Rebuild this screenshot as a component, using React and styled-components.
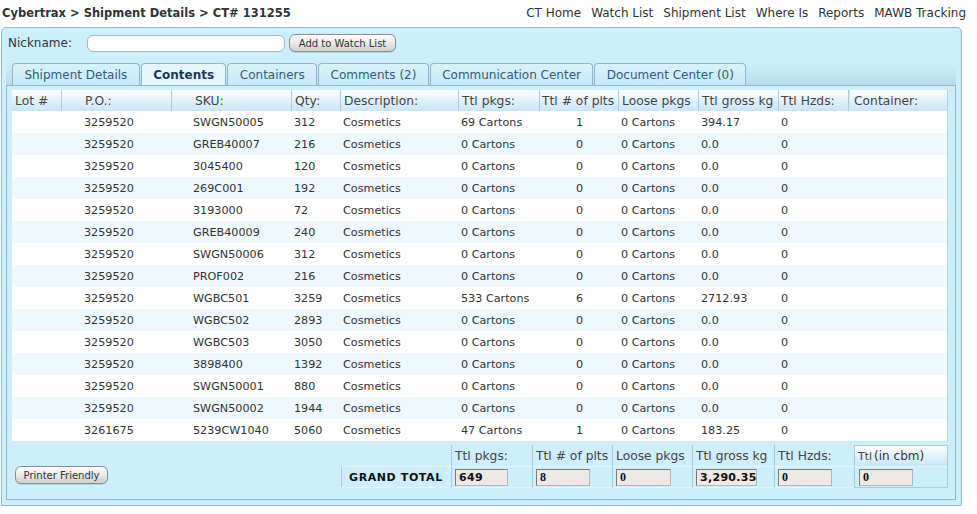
import React from "react";
import styled, { createGlobalStyle } from "styled-components";

const GlobalStyle = createGlobalStyle`
  html, body {
    margin: 0;
    padding: 0;
    background: #ffffff;
  }
  body {
    font-family: "DejaVu Sans", Verdana, sans-serif;
    font-size: 12px;
    color: #333333;
  }
`;

const rows = [
    ["3259520", "SWGN50005", "312", "69 Cartons", "1", "394.17"],
    ["3259520", "GREB40007", "216", "0 Cartons", "0", "0.0"],
    ["3259520", "3045400", "120", "0 Cartons", "0", "0.0"],
    ["3259520", "269C001", "192", "0 Cartons", "0", "0.0"],
    ["3259520", "3193000", "72", "0 Cartons", "0", "0.0"],
    ["3259520", "GREB40009", "240", "0 Cartons", "0", "0.0"],
    ["3259520", "SWGN50006", "312", "0 Cartons", "0", "0.0"],
    ["3259520", "PROF002", "216", "0 Cartons", "0", "0.0"],
    ["3259520", "WGBC501", "3259", "533 Cartons", "6", "2712.93"],
    ["3259520", "WGBC502", "2893", "0 Cartons", "0", "0.0"],
    ["3259520", "WGBC503", "3050", "0 Cartons", "0", "0.0"],
    ["3259520", "3898400", "1392", "0 Cartons", "0", "0.0"],
    ["3259520", "SWGN50001", "880", "0 Cartons", "0", "0.0"],
    ["3259520", "SWGN50002", "1944", "0 Cartons", "0", "0.0"],
    ["3261675", "5239CW1040", "5060", "47 Cartons", "1", "183.25"]
];

const tabs = [
    "Shipment Details",
    "Contents",
    "Containers",
    "Comments (2)",
    "Communication Center",
    "Document Center (0)"
];

const navLinks = ["CT Home", "Watch List", "Shipment List", "Where Is", "Reports", "MAWB Tracking"];

const headers = [
    ["Lot #", 3],
    ["P.O.:", 23],
    ["SKU:", 23],
    ["Qty:", 3],
    ["Description:", 3],
    ["Ttl pkgs:", 3],
    ["Ttl # of plts", 2],
    ["Loose pkgs", 3],
    ["Ttl gross kg", 3],
    ["Ttl Hzds:", 2],
    ["Container:", 4]
];

const totals = [
    { label: "Ttl pkgs:", value: "649", width: 53 },
    { label: "Ttl # of plts", value: "8", serif: true, width: 54 },
    { label: "Loose pkgs", value: "0", serif: true, width: 55 },
    { label: "Ttl gross kg", value: "3,290.35", width: 61 },
    { label: "Ttl Hzds:", value: "0", serif: true, width: 54 }
];

const COLS = "50px 110px 120px 49px 118px 81px 79px 80px 80px 70px 99px";

const App = () => {
    return (
        <>
            <GlobalStyle />
            <TopBar>
                <Breadcrumb>Cybertrax &gt; Shipment Details &gt; CT# 131255</Breadcrumb>
                <Nav>
                    {navLinks.map(l => <NavLink key={l}>{l}</NavLink>)}
                </Nav>
            </TopBar>
            <Panel>
                <NickRow>
                    <NickLabel>Nickname:</NickLabel>
                    <NickInput type="text" />
                    <GrayButton type="button">Add to Watch List</GrayButton>
                </NickRow>
                <TabStrip>
                    {tabs.map(t => (
                        <Tab key={t} $active={t === "Contents"}>{t}</Tab>
                    ))}
                </TabStrip>
                <ContentBox>
                    <Table>
                        <HeadRow>
                            {headers.map(([h, pad]) => (
                                <HeadCell key={h} $pad={pad}>{h}</HeadCell>
                            ))}
                        </HeadRow>
                        {rows.map((r, i) => (
                            <Row key={i} $striped={i % 2 === 1}>
                                <Cell />
                                <Cell $pad={22}>{r[0]}</Cell>
                                <Cell $pad={21}>{r[1]}</Cell>
                                <Cell>{r[2]}</Cell>
                                <Cell>Cosmetics</Cell>
                                <Cell>{r[3]}</Cell>
                                <Cell $center>{r[4]}</Cell>
                                <Cell>0 Cartons</Cell>
                                <Cell>{r[5]}</Cell>
                                <Cell $pad={2}>0</Cell>
                                <Cell />
                            </Row>
                        ))}
                    </Table>
                    <Footer>
                        <PrintButton type="button">Printer Friendly</PrintButton>
                        <Totals>
                            <TotalsHeadCell $first />
                            {totals.map(t => (
                                <TotalsHeadCell key={t.label}>{t.label}</TotalsHeadCell>
                            ))}
                            <CbmHead>Ttl<CbmSub>(in cbm)</CbmSub></CbmHead>
                            <GrandLabel>GRAND TOTAL</GrandLabel>
                            {totals.map(t => (
                                <TotalsCell key={t.label}>
                                    <TotalBox $serif={t.serif} $width={t.width}>{t.value}</TotalBox>
                                </TotalsCell>
                            ))}
                            <CbmCell>
                                <TotalBox $serif $width={54}>0</TotalBox>
                            </CbmCell>
                        </Totals>
                    </Footer>
                </ContentBox>
            </Panel>
        </>
    );
};

export default App;


const TopBar = styled.div`
    height: 27px;
    display: flex;
    align-items: center;
    justify-content: space-between;
    padding: 0 11px 0 2px;
    box-sizing: border-box;
    width: 977px;
`;

const Breadcrumb = styled.div`
    font-weight: bold;
    font-size: 11.5px;
    color: #333;
    margin-top: -1px;
`;

const Nav = styled.div`
    display: flex;
    gap: 10px;
    margin-top: -1px;
`;

const NavLink = styled.span`
    color: #333;
    cursor: pointer;
`;

const Panel = styled.div`
    margin-left: 1px;
    width: 961px;
    box-sizing: border-box;
    border: 1px solid #93bcd1;
    border-radius: 5px 5px 0 0;
    background: #cdeefb;
    padding: 6px 5px 5px 4px;
`;

const NickRow = styled.div`
    display: flex;
    align-items: center;
    height: 18px;
    padding-left: 2px;
`;

const NickLabel = styled.span`
    width: 79px;
    color: #333;
`;

const NickInput = styled.input`
    width: 198px;
    height: 17px;
    box-sizing: border-box;
    border: 1px solid #a3b8c4;
    border-radius: 6px;
    background: #fff;
    margin: 0 4px 0 0;
    padding: 0 4px;
`;

const GrayButton = styled.button`
    height: 18px;
    width: 107px;
    padding: 0;
    font-family: "DejaVu Sans", Verdana, sans-serif;
    font-size: 10px;
    color: #333;
    border: 1px solid #8d8d8d;
    border-radius: 6px;
    background: linear-gradient(180deg, #fdfdfd 0%, #e9e9e9 50%, #cfcfcf 100%);
    box-shadow: 0 1px 0 0 rgba(24, 50, 71, 0.15);
`;

const TabStrip = styled.div`
    margin-top: 11px;
    width: 950px;
    height: 22px;
    box-sizing: border-box;
    display: flex;
    gap: 1px;
    padding-left: 6px;
    background: linear-gradient(180deg, #cdeefb 0%, #c3e4f3 60%, #b6d9ea 100%);
`;

const Tab = styled.div`
    height: 22px;
    box-sizing: border-box;
    display: flex;
    align-items: center;
    padding: 1px 11.4px 0 11.4px;
    border: 1px solid #8fb6ca;
    border-bottom: none;
    border-radius: 4px 4px 0 0;
    font-size: 12px;
    ${props => props.$active ?
        `
            background: #e6f6fd;
            color: #1c3957;
            font-weight: bold;
        `
        :
        `
            background: linear-gradient(180deg, #d8f2fc 0%, #c8e9f8 100%);
            color: #2f5c7e;
        `
    };
`;

const ContentBox = styled.div`
    width: 950px;
    box-sizing: border-box;
    border: 1px solid #8fb6ca;
    padding: 4px 7px 11px 5px;
    background: #cdeefb;
`;

const Table = styled.div`
    width: 936px;
    background: #fff;
    border-right: 1px solid #b6d3e0;
    box-sizing: border-box;
`;

const HeadRow = styled.div`
    display: grid;
    grid-template-columns: ${COLS};
    height: 21px;
    background: linear-gradient(180deg, #ffffff 0%, #e4f3fb 45%, #c6e5f4 100%);
`;

const HeadCell = styled.div`
    display: flex;
    align-items: center;
    padding-left: ${props => props.$pad}px;
    color: #454545;
    font-size: 12.3px;
    border-right: 1px solid #a9cbdc;
    white-space: nowrap;
    overflow: hidden;
    &:last-child {
        border-right: none;
        border-left: 1px solid #d6e8f1;
    }
`;

const Row = styled.div`
    display: grid;
    grid-template-columns: ${COLS};
    height: 22px;
    background: ${props => props.$striped ? "#eff8fd" : "#ffffff"};
`;

const Cell = styled.div`
    display: flex;
    align-items: center;
    justify-content: ${props => props.$center ? "center" : "flex-start"};
    padding-left: ${props => props.$center ? 0 : (props.$pad ?? 2)}px;
    white-space: nowrap;
    font-size: 11.2px;
    color: #333;
`;

const Footer = styled.div`
    display: flex;
    align-items: flex-start;
    justify-content: space-between;
    margin-top: 4px;
`;

const PrintButton = styled(GrayButton)`
    width: 93px;
    margin: 21px 0 0 3px;
`;

const Totals = styled.div`
    display: grid;
    grid-template-columns: 110px 81px 80px 80px 82px 80px 94px;
    grid-template-rows: 21px 22px;
    width: 607px;
`;

const TotalsHeadCell = styled.div`
    display: flex;
    align-items: center;
    padding-left: ${props => props.$first ? 0 : 3}px;
    border-left: ${props => props.$first ? "none" : "1px solid #a9cbdc"};
    color: #454545;
    font-size: 12.3px;
    white-space: nowrap;
`;

const CbmHead = styled.div`
    display: flex;
    align-items: center;
    padding-left: 3px;
    border: 1px solid #a9cbdc;
    border-bottom: none;
    background: linear-gradient(180deg, #ffffff 0%, #e4f3fb 45%, #c6e5f4 100%);
    color: #444;
    font-size: 11px;
`;

const CbmSub = styled.span`
    font-size: 12px;
    color: #333;
    margin-left: 2px;
`;

const GrandLabel = styled.div`
    display: flex;
    align-items: center;
    padding-left: 7px;
    border-left: 1px solid #a9cbdc;
    border-top: 1px solid #e2f4fc;
    border-bottom: 1px solid #e2f4fc;
    font-weight: bold;
    font-size: 11px;
    letter-spacing: 0.6px;
    color: #111;
`;

const TotalsCell = styled.div`
    display: flex;
    align-items: center;
    padding-left: 3px;
    border-left: 1px solid #a9cbdc;
    border-top: 1px solid #e2f4fc;
    border-bottom: 1px solid #e2f4fc;
`;

const CbmCell = styled(TotalsCell)`
    border: 1px solid #a9cbdc;
    border-top: 1px solid #e2f4fc;
    padding-left: 4px;
`;

const TotalBox = styled.div`
    width: ${props => props.$width}px;
    height: 17px;
    box-sizing: border-box;
    display: flex;
    align-items: center;
    padding-left: 3px;
    background: #ece9e7;
    border: 1px solid #b5b5b5;
    border-top-color: #7b7b7b;
    border-left-color: #7b7b7b;
    font-weight: bold;
    color: #111;
    font-family: ${props => props.$serif ? `"Liberation Serif", "Times New Roman", serif` : `"DejaVu Sans", Verdana, sans-serif`};
    font-size: ${props => props.$serif ? "12px" : "11px"};
    letter-spacing: ${props => props.$serif ? "0" : "0.3px"};
`;
